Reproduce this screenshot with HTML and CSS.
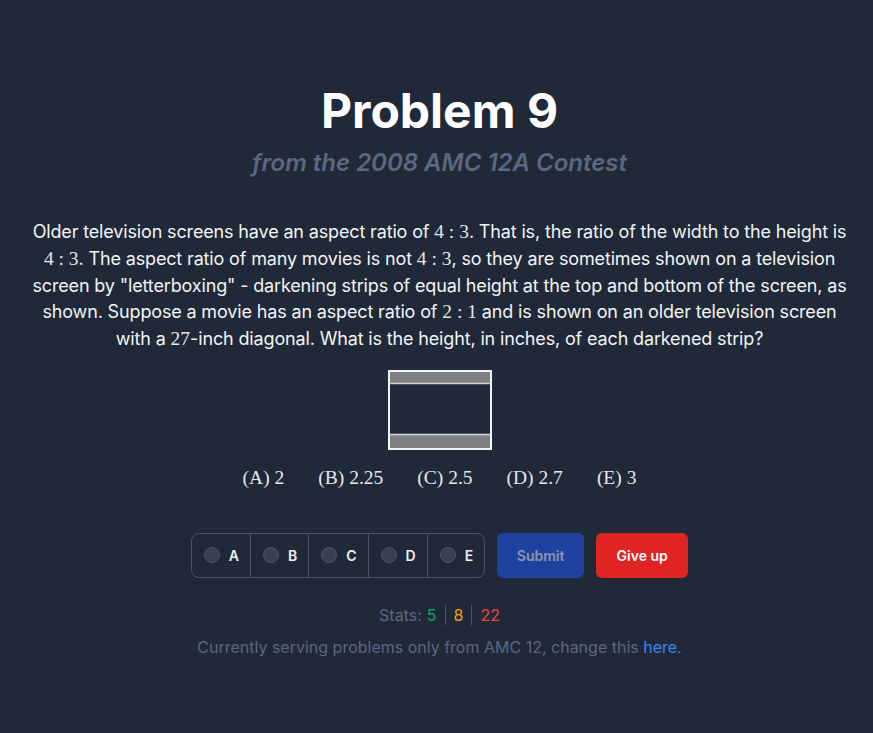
FILE: index.html
```html
<!DOCTYPE html>
<html lang="en">
<head>
<meta charset="utf-8">
<title>Problem 9</title>
<link rel="stylesheet" href="styles.css">
</head>
<body>
<main class="page">
  <h1 class="title">Problem 9</h1>
  <h2 class="subtitle">from the 2008 AMC 12A Contest</h2>
  <p class="problem">Older television screens have an aspect ratio of <span class="m">4 : 3</span>. That is, the ratio of the width to the height is<br><span class="m">4 : 3</span>. The aspect ratio of many movies is not <span class="m">4 : 3</span>, so they are sometimes shown on a television<br>screen by "letterboxing" - darkening strips of equal height at the top and bottom of the screen, as<br>shown. Suppose a movie has an aspect ratio of <span class="m">2 : 1</span> and is shown on an older television screen<br>with a <span class="m">27</span>-inch diagonal. What is the height, in inches, of each darkened strip?</p>
  <div class="figure">
    <svg width="104" height="80" viewBox="0 0 104 80">
      <rect x="1" y="1" width="102" height="78" fill="#1f2937" stroke="#f3f4f6" stroke-width="2"/>
      <rect x="2" y="2" width="100" height="11" fill="#808080"/>
      <line x1="1" y1="13.5" x2="103" y2="13.5" stroke="#d1d5db" stroke-width="1.5"/>
      <rect x="2" y="65" width="100" height="13" fill="#808080"/>
      <line x1="1" y1="64.5" x2="103" y2="64.5" stroke="#d1d5db" stroke-width="1.5"/>
    </svg>
  </div>
  <div class="choices">
    <span>(A) 2</span>
    <span>(B) 2.25</span>
    <span>(C) 2.5</span>
    <span>(D) 2.7</span>
    <span>(E) 3</span>
  </div>
  <div class="controls">
    <div class="radio-group">
      <label class="opt"><span class="dot"></span><span class="letter">A</span></label>
      <label class="opt"><span class="dot"></span><span class="letter">B</span></label>
      <label class="opt"><span class="dot"></span><span class="letter">C</span></label>
      <label class="opt"><span class="dot"></span><span class="letter">D</span></label>
      <label class="opt"><span class="dot"></span><span class="letter">E</span></label>
    </div>
    <button class="btn btn-submit">Submit</button>
    <button class="btn btn-give">Give up</button>
  </div>
  <p class="stats">Stats: <span class="g">5</span><span class="sep"></span><span class="o">8</span><span class="sep"></span><span class="r">22</span></p>
  <p class="footer">Currently serving problems only from AMC 12, change this <a href="#">here</a>.</p>
</main>
</body>
</html>
```

FILE: styles.css
```css
html, body {
  margin: 0;
  padding: 0;
  background: #1f2937;
  min-height: 100%;
}
body {
  font-family: Inter, "Noto Sans", sans-serif;
  color: #f3f4f6;
  height: 733px;
}
.page {
  display: flex;
  flex-direction: column;
  align-items: center;
  padding: 87px 22px 0 28px;
}
.title {
  margin: 0;
  font-size: 48px;
  line-height: 48px;
  font-weight: 700;
  color: #ffffff;
}
.subtitle {
  margin: 12px 0 0;
  font-size: 24px;
  line-height: 32px;
  font-weight: 600;
  font-style: italic;
  color: #5b6880;
}
.problem {
  margin: 40px 0 0;
  font-size: 18px;
  line-height: 26.75px;
  letter-spacing: -0.15px;
  text-align: center;
  white-space: nowrap;
  color: #f3f4f6;
}
.m {
  font-family: "Liberation Serif", "DejaVu Serif", serif;
  font-size: 19.5px;
  letter-spacing: 0;
  color: #e5e7eb;
}
.figure {
  margin-top: 17px;
  height: 80px;
}
.figure svg {
  display: block;
}
.choices {
  margin-top: 16px;
  display: flex;
  gap: 34px;
  font-family: "Liberation Serif", "DejaVu Serif", serif;
  font-size: 19.5px;
  line-height: 24px;
  color: #e5e7eb;
}
.controls {
  margin-top: 43px;
  display: flex;
  gap: 12px;
  height: 45px;
}
.radio-group {
  display: flex;
  border: 1px solid #4b5563;
  border-radius: 8px;
}
.opt {
  display: flex;
  align-items: center;
  gap: 9px;
  padding: 0 11px 0 12px;
  border-left: 1px solid #4b5563;
}
.opt:first-child {
  border-left: none;
}
.dot {
  width: 14px;
  height: 14px;
  border-radius: 50%;
  background: #374151;
  border: 1px solid #4b5563;
}
.letter {
  font-size: 14px;
  font-weight: 600;
  color: #eef0f3;
}
.btn {
  border: none;
  border-radius: 6px;
  font-family: Inter, "Noto Sans", sans-serif;
  font-size: 14px;
  font-weight: 600;
  height: 45px;
}
.btn-submit {
  width: 87px;
  background: #1e429f;
  color: #8b97b0;
}
.btn-give {
  width: 92px;
  background: #e02424;
  color: #ffffff;
}
.stats {
  margin: 25px 0 0;
  font-size: 16px;
  line-height: 24px;
  color: #5b6880;
  display: flex;
  align-items: center;
}
.stats .g { color: #10a56a; margin-left: 5px; }
.stats .o { color: #f59e0b; }
.stats .r { color: #ef4444; }
.sep {
  display: inline-block;
  width: 1px;
  height: 20px;
  background: #4b5563;
  margin: 0 8px;
}
.footer {
  margin: 8px 0 0;
  font-size: 16px;
  line-height: 24px;
  color: #5b6880;
}
.footer a {
  color: #3f83f8;
  text-decoration: none;
}
```
